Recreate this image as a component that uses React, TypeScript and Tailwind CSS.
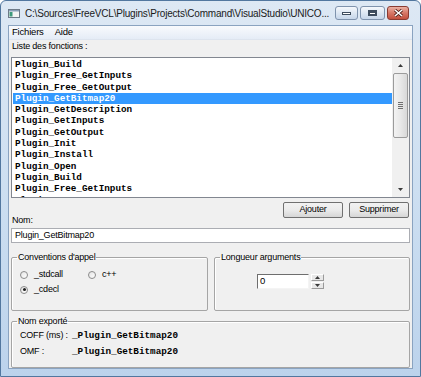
const functions = [
  'Plugin_Build',
  'Plugin_Free_GetInputs',
  'Plugin_Free_GetOutput',
  'Plugin_GetBitmap20',
  'Plugin_GetDescription',
  'Plugin_GetInputs',
  'Plugin_GetOutput',
  'Plugin_Init',
  'Plugin_Install',
  'Plugin_Open',
  'Plugin_Build',
  'Plugin_Free_GetInputs',
  'Plugin_Free_GetOutput',
];

const mono = "font-['Liberation_Mono','Courier_New',monospace] text-[9.3px] font-bold";

function Radio({ label, checked }: { label: string; checked?: boolean }) {
  return (
    <div className="flex h-[11px] items-center gap-[6px]">
      <span className="flex h-[8px] w-[8px] items-center justify-center rounded-full border border-[#8b8b8b] bg-gradient-to-br from-[#e4e4e4] to-white">
        {checked ? <span className="h-[3px] w-[3px] rounded-full bg-[#1f1f1f]" /> : null}
      </span>
      <span>{label}</span>
    </div>
  );
}

function Group({ title, className, children }: { title: string; className?: string; children: React.ReactNode }) {
  return (
    <fieldset className={`rounded-[2px] border border-[#a5a5a5] shadow-[inset_1px_1px_0_#fff] ${className ?? ''}`}>
      <legend className="ml-[5px] h-[11px] px-[1px] leading-[11px]">{title}</legend>
      {children}
    </fieldset>
  );
}

function Triangle({ down }: { down?: boolean }) {
  return (
    <svg width="5" height="3" viewBox="0 0 5 3">
      <path d={down ? 'M0 0h5L2.5 3z' : 'M0 3h5L2.5 0z'} fill="#3a3a3a" />
    </svg>
  );
}

function Button({ children }: { children: React.ReactNode }) {
  return (
    <div className="flex h-[16px] w-[60px] items-center justify-center rounded-[2px] border border-[#707070] bg-gradient-to-b from-[#f2f2f2] via-[#ebebeb] to-[#d6d6d6]">
      {children}
    </div>
  );
}

export default function App() {
  return (
    <div className="flex h-[377px] w-[421px] flex-col overflow-hidden rounded-t-[6px] border border-[#52779f] bg-gradient-to-b from-[#dde8f4] via-[#cddff1] to-[#bcd3ec] font-['Liberation_Sans',Arial,sans-serif] text-[9px] tracking-[-0.2px] text-black">
      {/* title bar */}
      <div className="flex h-[24px] shrink-0 items-center pl-[7px] pr-[11px]">
        <svg width="12" height="9" viewBox="0 0 12 9" className="shrink-0">
          <rect x="0.5" y="0.5" width="11" height="8" fill="#f4f4f4" stroke="#6d7a88" />
          <rect x="1" y="1" width="10" height="1.5" fill="#8aa0b8" />
          <rect x="1.5" y="3" width="3" height="4.5" fill="#3f9a7d" />
        </svg>
        <span className="ml-[5px] whitespace-nowrap text-[10px] tracking-[-0.2px] text-[#1a1a1a]">
          C:\Sources\FreeVCL\Plugins\Projects\Command\VisualStudio\UNICO...
        </span>
        <div className="ml-auto flex shrink-0 items-center gap-[2px] pl-[6px]">
          <div className="flex h-[14px] w-[23px] items-center justify-center rounded-[3px] border border-[#7f93ad] bg-gradient-to-b from-[#f5f8fc] via-[#dde7f3] to-[#c6d6ea]">
            <span className="h-[3px] w-[9px] border border-[#3d4c5e] bg-white" />
          </div>
          <div className="flex h-[14px] w-[25px] items-center justify-center rounded-[3px] border border-[#7f93ad] bg-gradient-to-b from-[#f5f8fc] via-[#dde7f3] to-[#c6d6ea]">
            <span className="h-[6px] w-[9px] border-[2px] border-t-[3px] border-[#3d4c5e] bg-white" />
          </div>
          <div className="flex h-[14px] w-[22px] items-center justify-center rounded-[3px] border border-[#8a3b31] bg-gradient-to-b from-[#eab1a3] via-[#d77766] to-[#c3503e]">
            <svg width="9" height="8" viewBox="0 0 9 8">
              <path d="M1 1l7 6M8 1L1 7" stroke="#4d1d17" strokeWidth="3" />
              <path d="M1 1l7 6M8 1L1 7" stroke="#fff" strokeWidth="1.6" />
            </svg>
          </div>
        </div>
      </div>

      {/* client */}
      <div className="mx-[7px] flex flex-1 flex-col border border-[#8aa3c0] bg-[#f0f0f0]">
        <div className="flex h-[14px] items-center gap-[11px] border-b border-[#dde4ee] bg-gradient-to-b from-[#f8fafd] to-[#e5ecf6] px-[3px] text-[9.5px]">
          <span>Fichiers</span>
          <span>Aide</span>
        </div>

        <div className="flex flex-col px-[2px]">
          <div className="mt-[1px] h-[11px] pl-[1px] leading-[11px]">Liste des fonctions :</div>

          <div className="mt-[5px] flex h-[141px] border border-[#828790] bg-white">
            <div className={`flex-1 overflow-hidden pl-[1px] pt-[1px] ${mono}`}>
              {functions.map((name, i) => (
                <div
                  key={i}
                  className={`h-[11.3px] pl-[2px] leading-[11.3px] tracking-normal ${
                    i === 3 ? 'bg-[#3399ff] text-white' : 'text-black'
                  }`}
                >
                  {name}
                </div>
              ))}
            </div>
            <div className="flex w-[17px] flex-col bg-[#f0f0f0]">
              <div className="flex h-[15px] items-center justify-center">
                <Triangle />
              </div>
              <div className="mx-[1px] flex h-[65px] items-center justify-center rounded-[2px] border border-[#9b9b9b] bg-gradient-to-r from-[#f3f3f3] via-[#e8e8e8] to-[#d8d8d8]">
                <div className="flex flex-col gap-[1px]">
                  <span className="h-[1px] w-[5px] bg-[#707070]" />
                  <span className="h-[1px] w-[5px] bg-[#707070]" />
                  <span className="h-[1px] w-[5px] bg-[#707070]" />
                  <span className="h-[1px] w-[5px] bg-[#707070]" />
                </div>
              </div>
              <div className="flex-1" />
              <div className="flex h-[15px] items-center justify-center">
                <Triangle down />
              </div>
            </div>
          </div>

          <div className="mt-[4px] flex items-start">
            <span className="mt-[13px] h-[11px] pl-[1px] leading-[11px]">Nom:</span>
            <div className="ml-auto mr-[1px] flex gap-[6px]">
              <Button>Ajouter</Button>
              <Button>Supprimer</Button>
            </div>
          </div>

          <div className="mt-[2px] flex h-[15px] items-center border border-[#abadb3] bg-white pl-[3px]">
            Plugin_GetBitmap20
          </div>

          <div className="mt-[9px] flex gap-[6px]">
            <Group title="Conventions d'appel" className="h-[59px] w-[197px]">
              <div className="grid grid-cols-[68px_1fr] gap-y-[4px] pl-[8px] pt-[6px]">
                <Radio label="_stdcall" />
                <Radio label="c++" />
                <Radio label="_cdecl" checked />
              </div>
            </Group>
            <Group title="Longueur arguments" className="h-[59px] flex-1">
              <div className="flex gap-[2px] pl-[42px] pt-[11px]">
                <div className="flex h-[15px] w-[52px] items-center border border-[#f4f4f4] border-l-[#6e6e6e] border-t-[#6e6e6e] bg-white pl-[2px] text-[9.5px]">
                  0
                </div>
                <div className="flex w-[13px] flex-col gap-[1px]">
                  <div className="flex h-[7px] items-center justify-center border border-[#9a9a9a] border-l-white border-t-white bg-[#e8e8e8]">
                    <Triangle />
                  </div>
                  <div className="flex h-[7px] items-center justify-center border border-[#9a9a9a] border-l-white border-t-white bg-[#e8e8e8]">
                    <Triangle down />
                  </div>
                </div>
              </div>
            </Group>
          </div>

          <Group title="Nom exporté" className="mt-[5px] h-[52px]">
            <div className="flex flex-col gap-[5px] pl-[8px] pt-[3px]">
              <div className="flex h-[11px] items-center">
                <span className="w-[52px]">COFF (ms) :</span>
                <span className={`${mono} tracking-normal`}>_Plugin_GetBitmap20</span>
              </div>
              <div className="flex h-[11px] items-center">
                <span className="w-[52px]">OMF :</span>
                <span className={`${mono} tracking-normal`}>_Plugin_GetBitmap20</span>
              </div>
            </div>
          </Group>
        </div>
      </div>

      <div className="h-[7px] shrink-0" />
    </div>
  );
}
